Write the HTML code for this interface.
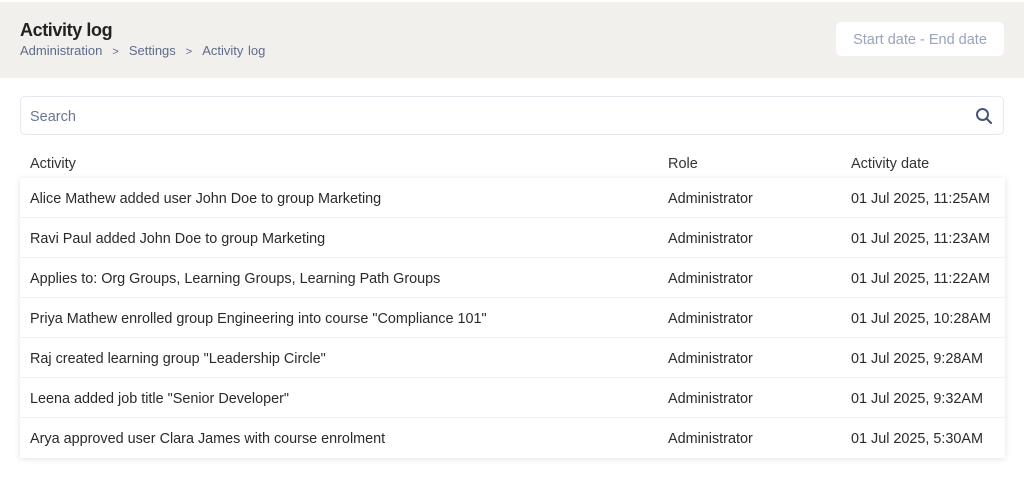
<!DOCTYPE html>
<html><head><style>
body{margin:0;width:1024px;height:500px;background:#fff;font-family:"Liberation Sans",sans-serif;overflow:hidden;position:relative}
.hdr{position:absolute;left:0;top:2px;width:1024px;height:76px;background:#f1f0ed}
h1{position:absolute;left:20px;top:20px;margin:0;font-size:18px;font-weight:bold;color:#222;letter-spacing:-0.4px}
.bc{position:absolute;left:20px;top:43px;font-size:13px;color:#5f6b8a;word-spacing:1px}
.bc span{margin:0 10px;font-size:11px}
.date{position:absolute;left:836px;top:22px;width:168px;height:34px;background:#fff;border-radius:5px;color:#9aa3bd;font-size:14.5px;line-height:36px;text-align:center}
.search{position:absolute;left:20px;top:96px;width:984px;height:39px;border:1px solid #e6e8ef;border-radius:5px;box-sizing:border-box}
.search .ph{position:absolute;left:9px;top:12px;font-size:14.5px;color:#6b7595}
.search svg{position:absolute;right:10px;top:10px}
.th{position:absolute;top:156px;font-size:14.5px;color:#333}
.tbl{position:absolute;left:20px;top:178px;width:985px;box-shadow:0 1px 6px rgba(0,0,0,0.12)}
.row{height:39px;border-bottom:1px solid #f0f0f0;position:relative;font-size:14.4px;color:#2a2a2a;background:#fff}
.row div{position:absolute;top:13px}
.a{left:10px}.r{left:648px}.d{left:831px}
</style></head><body>
<div class="hdr"></div>
<h1>Activity log</h1>
<div class="bc">Administration<span>&gt;</span>Settings<span>&gt;</span>Activity log</div>
<div class="date">Start date - End date</div>
<div class="search"><div class="ph">Search</div>
<svg width="18" height="18" viewBox="0 0 18 18"><circle cx="7.5" cy="7.5" r="5.5" fill="none" stroke="#4a5578" stroke-width="2"/><line x1="11.5" y1="11.5" x2="16" y2="16" stroke="#4a5578" stroke-width="2.2" stroke-linecap="round"/></svg></div>
<div class="th" style="left:30px">Activity</div>
<div class="th" style="left:668px">Role</div>
<div class="th" style="left:851px">Activity date</div>
<div class="tbl">
<div class="row"><div class="a">Alice Mathew added user John Doe to group Marketing</div><div class="r">Administrator</div><div class="d">01 Jul 2025, 11:25AM</div></div>
<div class="row"><div class="a">Ravi Paul added John Doe to group Marketing</div><div class="r">Administrator</div><div class="d">01 Jul 2025, 11:23AM</div></div>
<div class="row"><div class="a">Applies to: Org Groups, Learning Groups, Learning Path Groups</div><div class="r">Administrator</div><div class="d">01 Jul 2025, 11:22AM</div></div>
<div class="row"><div class="a">Priya Mathew enrolled group Engineering into course "Compliance 101"</div><div class="r">Administrator</div><div class="d">01 Jul 2025, 10:28AM</div></div>
<div class="row"><div class="a">Raj created learning group "Leadership Circle"</div><div class="r">Administrator</div><div class="d">01 Jul 2025, 9:28AM</div></div>
<div class="row"><div class="a">Leena added job title "Senior Developer"</div><div class="r">Administrator</div><div class="d">01 Jul 2025, 9:32AM</div></div>
<div class="row" style="border-bottom:none;height:40px"><div class="a">Arya approved user Clara James with course enrolment</div><div class="r">Administrator</div><div class="d">01 Jul 2025, 5:30AM</div></div>
</div>
</body></html>
